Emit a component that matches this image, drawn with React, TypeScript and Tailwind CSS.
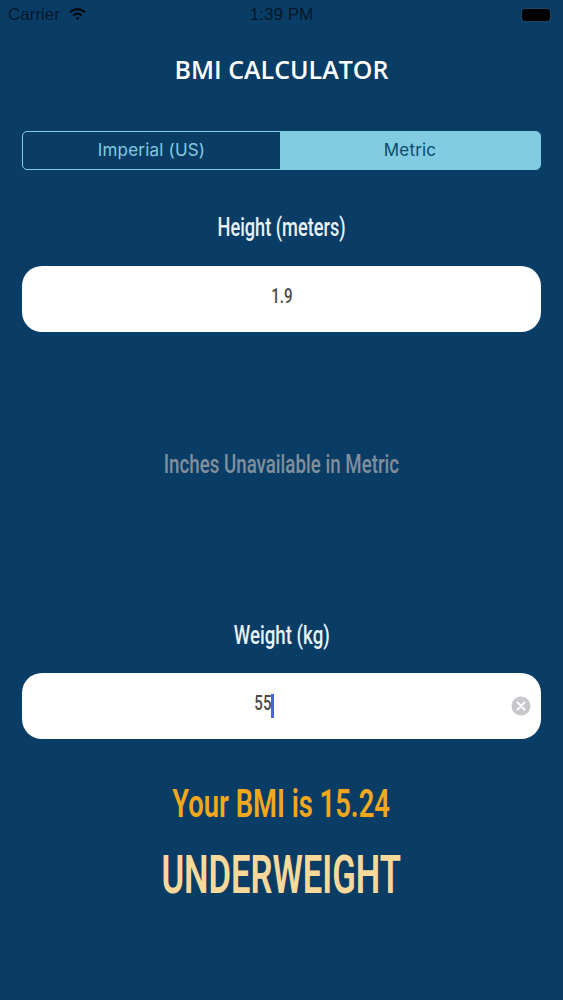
const din = "font-['Roboto',sans-serif] inline-block scale-x-[0.72]";

const Field = ({ value, focused }: { value: string; focused?: boolean }) => (
  <div className={`relative mx-[22px] flex h-[66px] items-center justify-center rounded-[20px] bg-white ${focused ? "pr-[38px]" : ""}`}>
    <span className={`${din} mb-[6px] text-[21px] font-medium leading-none text-[#4a4a4a]`}>{value}</span>
    {focused && <span className="ml-[-3px] h-[24px] w-[3px] bg-[#4a63d8]" />}
    {focused && (
      <svg className="absolute right-[10px] top-[23px] h-[20px] w-[20px]" viewBox="0 0 20 20">
        <circle cx="10" cy="10" r="9.5" fill="#c7c7cc" />
        <path d="M6.5 6.5l7 7M13.5 6.5l-7 7" stroke="#fff" strokeWidth="2" strokeLinecap="round" />
      </svg>
    )}
  </div>
);

export default function App() {
  return (
    <div className="flex h-[1000px] w-[563px] flex-col overflow-hidden bg-[#0a3d66] font-['Liberation_Sans',sans-serif]">
      {/* status bar */}
      <div className="relative flex h-[30px] items-center justify-between px-[8px] text-[#04182a]">
        <div className="flex items-center gap-[8px] text-[17px]">
          <span>Carrier</span>
          <svg className="mt-[-2px] h-[13px] w-[19px] text-[#020c16]" viewBox="0 0 20 15" fill="currentColor">
            <path d="M10 0C6.2 0 2.9 1.5.4 3.9l1.9 2C4.3 4 7 2.9 10 2.9s5.7 1.1 7.7 3l1.9-2C17.1 1.5 13.8 0 10 0z" />
            <path d="M10 5.2c-2.3 0-4.3.9-5.9 2.4l2 2C7.1 8.6 8.5 8.1 10 8.1s2.9.5 3.9 1.5l2-2C14.3 6.1 12.3 5.2 10 5.2z" />
            <path d="M10 10.4c-1 0-1.8.4-2.4 1l2.4 2.6 2.4-2.6c-.6-.6-1.4-1-2.4-1z" />
          </svg>
        </div>
        <span className="absolute inset-x-0 text-center text-[17px]">1:39 PM</span>
        <div className="mr-[4px] h-[14px] w-[30px] rounded-[4px] border border-[#1d4666] bg-black" />
      </div>

      <h1 className="mt-[22px] text-center font-['Open_Sans',sans-serif] text-[25px] font-semibold leading-[34px] text-white">
        BMI CALCULATOR
      </h1>

      <div className="mx-[22px] mt-[45px] flex h-[39px] overflow-hidden rounded-[5px] border-[1.5px] border-[#82cce2] font-['Inter',sans-serif] text-[17px] tracking-[0.2px]">
        <div className="flex flex-1 items-center justify-center text-[#82cce2]">Imperial (US)</div>
        <div className="flex w-[260px] items-center justify-center bg-[#82cce2] text-[#0a4a6e]">Metric</div>
      </div>

      <div className="mt-[41px] text-center leading-[32px]">
        <span className="inline-block scale-x-[0.7] font-['Roboto',sans-serif] text-[26px] font-medium text-[#e6f1f8]">Height (meters)</span>
      </div>
      <div className="mt-[19px]">
        <Field value="1.9" />
      </div>

      <div className="mt-[116px] text-center leading-[32px]">
        <span className={`${din} text-[26px] font-medium text-[#7f8f9c]`}>Inches Unavailable in Metric</span>
      </div>

      <div className="mt-[135px] text-center leading-[32px]">
        <span className={`${din} text-[26px] font-medium text-[#e6f1f8]`}>Weight (kg)</span>
      </div>
      <div className="mt-[18px]">
        <Field value="55" focused />
      </div>

      <div className="mt-[41px] text-center leading-[48px]">
        <span className={`${din} text-[38px] font-semibold text-[#f2a81d]`}>Your BMI is 15.24</span>
      </div>
      <div className="mt-[7px] text-center leading-[64px]">
        <span className="inline-block scale-x-[0.64] font-['Roboto',sans-serif] text-[54px] font-semibold text-[#f8d99b]">UNDERWEIGHT</span>
      </div>
    </div>
  );
}
